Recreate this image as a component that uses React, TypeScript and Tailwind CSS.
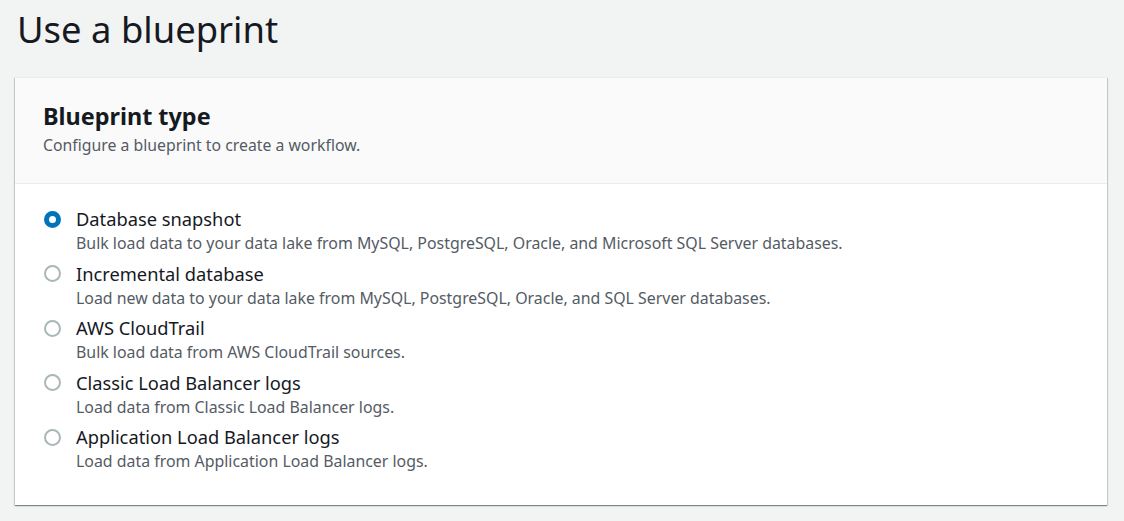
import React, { useState } from 'react';

const options = [
  {
    id: 'db-snapshot',
    label: 'Database snapshot',
    description: 'Bulk load data to your data lake from MySQL, PostgreSQL, Oracle, and Microsoft SQL Server databases.',
  },
  {
    id: 'incremental',
    label: 'Incremental database',
    description: 'Load new data to your data lake from MySQL, PostgreSQL, Oracle, and SQL Server databases.',
  },
  {
    id: 'cloudtrail',
    label: 'AWS CloudTrail',
    description: 'Bulk load data from AWS CloudTrail sources.',
  },
  {
    id: 'clb',
    label: 'Classic Load Balancer logs',
    description: 'Load data from Classic Load Balancer logs.',
  },
  {
    id: 'alb',
    label: 'Application Load Balancer logs',
    description: 'Load data from Application Load Balancer logs.',
  },
];

const App: React.FC = () => {
  const [selected, setSelected] = useState('db-snapshot');

  return (
    <div className="min-h-screen bg-[#f2f3f3] px-[15px] pt-[3px] text-[#16191f] [font-family:'Noto_Sans',sans-serif]">
      <h1 className="pl-[2px] text-[36.4px] leading-[52px] font-normal">Use a blueprint</h1>

      <div className="mt-[22px] bg-white border-t border-[#eaeded] shadow-[0_1px_1px_0_rgba(0,28,36,0.3),1px_1px_1px_0_rgba(0,28,36,0.15),-1px_1px_1px_0_rgba(0,28,36,0.15)] w-[1092px]">
        <div className="bg-[#fafafa] border-b border-[#eaeded] px-[28px] pt-[23px] pb-[27px]">
          <h2 className="text-[23.4px] leading-[30px] font-bold">Blueprint type</h2>
          <p className="mt-[3px] text-[15.8px] leading-[22px] text-[#545b64]">Configure a blueprint to create a workflow.</p>
        </div>

        <div className="px-[28px] pt-[22px] pb-[33px] flex flex-col gap-[6.5px]">
          {options.map(opt => {
            const checked = selected === opt.id;
            return (
              <label key={opt.id} className="flex items-start cursor-pointer" onClick={() => setSelected(opt.id)}>
                <span className="w-[33px] h-[26px] flex items-center shrink-0 pl-[0.5px]">
                  {checked ? (
                    <span className="w-[17px] h-[17px] rounded-full border-[5px] border-[#0073bb] bg-white" />
                  ) : (
                    <span className="w-[17px] h-[17px] rounded-full border-2 border-[#aab7b8] bg-white" />
                  )}
                </span>
                <span className="flex flex-col">
                  <span className="text-[18.3px] leading-[26px]">{opt.label}</span>
                  <span className="text-[15.9px] leading-[22px] text-[#545b64]">{opt.description}</span>
                </span>
              </label>
            );
          })}
        </div>
      </div>
    </div>
  );
};

export default App;
